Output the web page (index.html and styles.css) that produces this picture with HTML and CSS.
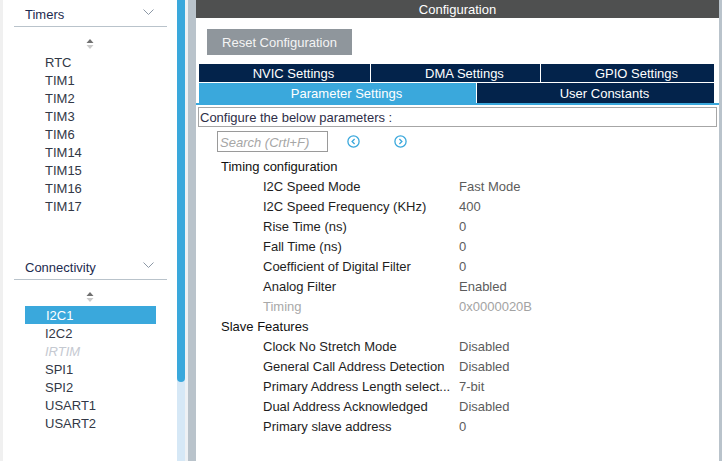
FILE: index.html
```html
<!DOCTYPE html>
<html>
<head>
<meta charset="utf-8">
<link rel="stylesheet" href="styles.css">
</head>
<body>
<div class="app">
  <div class="edge"></div>
  <aside class="sidebar">
    <section class="group">
      <div class="group-head">
        <span>Timers</span>
        <svg class="chev" width="11" height="6" viewBox="0 0 11 6"><polyline points="0.5,0.5 5.5,5.5 10.5,0.5" fill="none" stroke="#8c98a6" stroke-width="1"/></svg>
      </div>
      <div class="sort"><svg width="8" height="10" viewBox="0 0 8 10"><polygon points="0.5,4 4,0 7.5,4" fill="#707070"/><polygon points="0.5,6 7.5,6 4,10" fill="#cacaca"/></svg></div>
      <ul class="items">
        <li>RTC</li><li>TIM1</li><li>TIM2</li><li>TIM3</li><li>TIM6</li><li>TIM14</li><li>TIM15</li><li>TIM16</li><li>TIM17</li>
      </ul>
    </section>
    <section class="group conn">
      <div class="group-head">
        <span>Connectivity</span>
        <svg class="chev" width="11" height="6" viewBox="0 0 11 6"><polyline points="0.5,0.5 5.5,5.5 10.5,0.5" fill="none" stroke="#8c98a6" stroke-width="1"/></svg>
      </div>
      <div class="sort"><svg width="8" height="10" viewBox="0 0 8 10"><polygon points="0.5,4 4,0 7.5,4" fill="#707070"/><polygon points="0.5,6 7.5,6 4,10" fill="#cacaca"/></svg></div>
      <ul class="items">
        <li class="sel">I2C1</li><li>I2C2</li><li class="off">IRTIM</li><li>SPI1</li><li>SPI2</li><li>USART1</li><li>USART2</li>
      </ul>
    </section>
  </aside>
  <div class="vscroll"><div class="thumb"></div></div>
  <div class="gap"></div>
  <div class="splitter"></div>
  <main class="main">
    <div class="title">Configuration</div>
    <div class="toolbar"><div class="reset">Reset Configuration</div></div>
    <div class="tabs">
      <div class="tabrow r1">
        <div class="tab">NVIC Settings</div>
        <div class="tab">DMA Settings</div>
        <div class="tab">GPIO Settings</div>
      </div>
      <div class="tabrow r2">
        <div class="tab active">Parameter Settings</div>
        <div class="tab">User Constants</div>
      </div>
    </div>
    <div class="tabline"></div>
    <div class="desc">Configure the below parameters :</div>
    <div class="searchbar">
      <div class="search">Search (Crtl+F)</div>
      <svg class="nav" width="13" height="13" viewBox="0 0 13 13"><circle cx="6.5" cy="6.5" r="5.6" fill="none" stroke="#3aa8dc" stroke-width="1.3"/><polyline points="7.6,4 5.1,6.5 7.6,9" fill="none" stroke="#3aa8dc" stroke-width="1.3"/></svg>
      <svg class="nav" width="13" height="13" viewBox="0 0 13 13"><circle cx="6.5" cy="6.5" r="5.6" fill="none" stroke="#3aa8dc" stroke-width="1.3"/><polyline points="5.4,4 7.9,6.5 5.4,9" fill="none" stroke="#3aa8dc" stroke-width="1.3"/></svg>
    </div>
    <div class="tree">
      <div class="cat">Timing configuration</div>
      <div class="row"><span class="k">I2C Speed Mode</span><span class="v">Fast Mode</span></div>
      <div class="row"><span class="k">I2C Speed Frequency (KHz)</span><span class="v">400</span></div>
      <div class="row"><span class="k">Rise Time (ns)</span><span class="v">0</span></div>
      <div class="row"><span class="k">Fall Time (ns)</span><span class="v">0</span></div>
      <div class="row"><span class="k">Coefficient of Digital Filter</span><span class="v">0</span></div>
      <div class="row"><span class="k">Analog Filter</span><span class="v">Enabled</span></div>
      <div class="row dis"><span class="k">Timing</span><span class="v">0x0000020B</span></div>
      <div class="cat">Slave Features</div>
      <div class="row"><span class="k">Clock No Stretch Mode</span><span class="v">Disabled</span></div>
      <div class="row"><span class="k">General Call Address Detection</span><span class="v">Disabled</span></div>
      <div class="row"><span class="k">Primary Address Length select...</span><span class="v">7-bit</span></div>
      <div class="row"><span class="k">Dual Address Acknowledged</span><span class="v">Disabled</span></div>
      <div class="row"><span class="k">Primary slave address</span><span class="v">0</span></div>
    </div>
  </main>
  <div class="rgutter"></div>
</div>
</body>
</html>
```
FILE: styles.css
```css
* { box-sizing: border-box; }
html, body { margin: 0; padding: 0; }
body {
  width: 722px;
  height: 461px;
  overflow: hidden;
  font-family: "Liberation Sans", Arial, sans-serif;
  font-size: 13px;
  background: #fff;
}
.app { display: flex; width: 722px; height: 461px; }
.edge { width: 3px; background: #f0f0f0; flex: none; }
.sidebar { width: 174px; flex: none; background: #fff; }
.group-head {
  margin-left: 11px;
  width: 153px;
  height: 27px;
  border-bottom: 1px solid #b9c3cb;
  padding: 0 13px 0 11px;
  display: flex;
  align-items: center;
  justify-content: space-between;
  color: #1d2b4f;
  font-size: 13px;
}
.group-head span { line-height: 26px; padding-top: 3px; }
.chev { margin-top: -2px; }
.conn { margin-top: 38px; }
.sort {
  margin: 12px 0 4px 22px;
  width: 131px;
  height: 10px;
  display: flex;
  justify-content: center;
}
.sort svg { display: block; margin-left: -2px; }
.items { list-style: none; margin: 0 0 0 22px; padding: 0; width: 131px; }
.items li {
  height: 18px;
  line-height: 18px;
  padding: 1px 0 0 20px;
  color: #323846;
}
.items li.sel { background: #3aa8dc; color: #fff; padding-left: 21px; }
.items li.off { color: #c5c9d1; font-style: italic; }
.vscroll { width: 8px; flex: none; background: #d6e8f6; }
.thumb { height: 382px; background: #3aa8dc; border-radius: 0 0 4px 4px; }
.gap { width: 3px; flex: none; background: #eef1f4; }
.splitter { width: 8px; flex: none; background: #b9c3cb; }
.main { flex: 1; display: flex; flex-direction: column; background: #fff; min-width: 0; }
.rgutter { width: 3px; flex: none; background: #b9c3cb; }
.title {
  height: 18px;
  background: #4f5050;
  color: #fff;
  text-align: center;
  line-height: 18px;
  padding-top: 1px;
}
.toolbar { padding: 11px 0 0 11px; }
.reset {
  width: 145px;
  height: 26px;
  background: #8f969c;
  color: #f4f4f4;
  text-align: center;
  line-height: 26px;
  padding-top: 1px;
}
.tabs { margin: 9px 5px 0 3px; display: flex; flex-direction: column; gap: 1px; }
.tabrow { display: grid; gap: 1px; }
.r1 { grid-template-columns: 171px 169px 1fr; height: 18px; }
.r2 { grid-template-columns: 277px 1fr; height: 20px; }
.tab {
  background: #03234b;
  color: #fff;
  text-align: center;
  padding-left: 18px;
  display: flex;
  align-items: center;
  justify-content: center;
}
.r1 .tab { padding-top: 1px; }
.tab.active { background: #3aa8dc; }
.tabline { height: 2px; background: #3aa8dc; }
.desc {
  margin: 2px 2px 0 2px;
  height: 20px;
  border: 1px solid #a6a6a6;
  padding: 1px 0 0 1px;
  line-height: 18px;
  color: #2e2e48;
}
.searchbar {
  margin: 4px 0 0 21px;
  display: flex;
  align-items: center;
  height: 21px;
}
.search {
  width: 111px;
  height: 21px;
  border: 1px solid #9a9a9a;
  padding: 1px 0 0 2px;
  line-height: 19px;
  color: #a6a6a6;
  font-style: italic;
}
.nav { display: block; margin-top: -1px; }
.search + .nav { margin-left: 19px; }
.nav + .nav { margin-left: 34px; }
.tree { margin-top: 4px; }
.cat { height: 20px; line-height: 20px; padding: 1px 0 0 25px; color: #111; }
.row { height: 20px; line-height: 20px; display: flex; padding: 1px 0 0 67px; }
.row .k { width: 196px; color: #1e1e1e; white-space: nowrap; }
.row .v { color: #5c5c5c; white-space: nowrap; }
.row.dis .k { color: #a9a9a9; }
.row.dis .v { color: #a3a3a3; }
```
